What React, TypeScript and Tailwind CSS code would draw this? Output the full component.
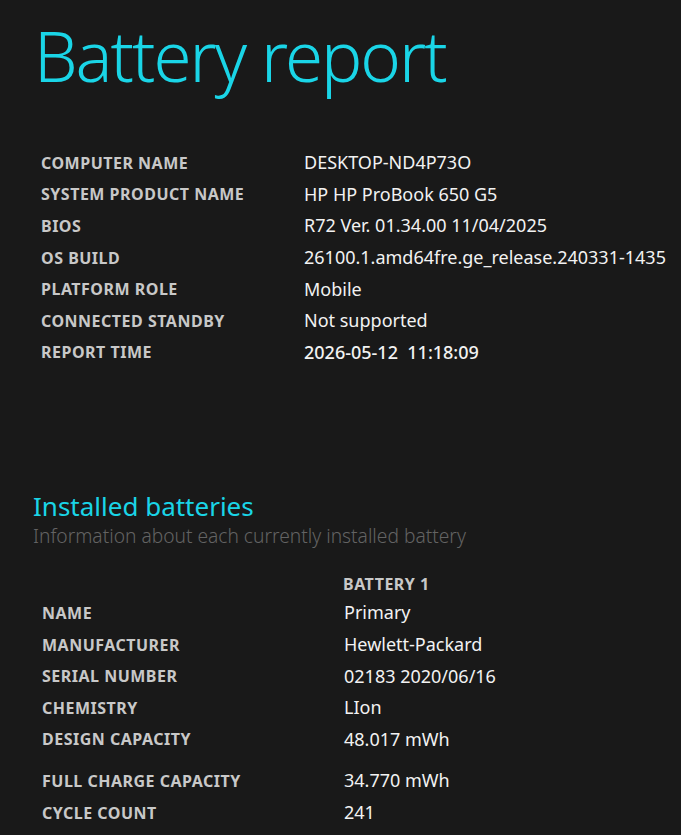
import React from "react";

const sys: [string, string][] = [
  ["COMPUTER NAME", "DESKTOP-ND4P73O"],
  ["SYSTEM PRODUCT NAME", "HP HP ProBook 650 G5"],
  ["BIOS", "R72 Ver. 01.34.00 11/04/2025"],
  ["OS BUILD", "26100.1.amd64fre.ge_release.240331-1435"],
  ["PLATFORM ROLE", "Mobile"],
  ["CONNECTED STANDBY", "Not supported"],
  ["REPORT TIME", "2026-05-12\u00a0\u00a011:18:09"],
];

const bat: [string, string][] = [
  ["NAME", "Primary"],
  ["MANUFACTURER", "Hewlett-Packard"],
  ["SERIAL NUMBER", "02183 2020/06/16"],
  ["CHEMISTRY", "LIon"],
  ["DESIGN CAPACITY", "48.017 mWh"],
];

const bat2: [string, string][] = [
  ["FULL CHARGE CAPACITY", "34.770 mWh"],
  ["CYCLE COUNT", "241"],
];

function Row({ k, v, w, pl, strong }: { k: string; v: string; w: string; pl: string; strong?: boolean }) {
  return (
    <div className="flex h-[31.6px] items-center">
      <div className={`${w} ${pl} text-[16px] font-bold tracking-[0.5px] text-[#c8c8c8]`}>{k}</div>
      <div className={`text-[18px] ${strong ? "font-medium" : ""} text-[#f2f2f2]`}>{v}</div>
    </div>
  );
}

export default function App() {
  return (
    <div
      className="min-h-[835px] w-[681px] overflow-hidden bg-[#191919] text-[#f2f2f2]"
      style={{ fontFamily: '"Noto Sans", "Open Sans", sans-serif' }}
    >
      <h1 className="pl-[34px] pt-[10px] text-[69px] leading-[90px] font-[350] text-[#1ad5e7] tracking-[-2px]">
        Battery report
      </h1>
      <div className="mt-[47px] flex flex-col">
        {sys.map(([k, v]) => (
          <Row key={k} k={k} v={v} w="w-[304px]" pl="pl-[41px]" strong={k === "REPORT TIME"} />
        ))}
      </div>
      <h2 className="mt-[123px] pl-[33px] text-[26px] leading-[30px] text-[#1ad5e7]">Installed batteries</h2>
      <p className="pl-[33px] text-[19.2px] leading-[30px] font-light text-[#636363]">
        Information about each currently installed battery
      </p>
      <div className="mt-[20px] flex h-[26px] items-center">
        <div className="w-[343px]" />
        <div className="text-[16px] font-bold tracking-[0.5px] text-[#c8c8c8]">BATTERY 1</div>
      </div>
      <div className="flex flex-col">
        {bat.map(([k, v]) => (
          <Row key={k} k={k} v={v} w="w-[344px]" pl="pl-[42px]" />
        ))}
      </div>
      <div className="mt-[10px] flex flex-col">
        {bat2.map(([k, v]) => (
          <Row key={k} k={k} v={v} w="w-[344px]" pl="pl-[42px]" />
        ))}
      </div>
    </div>
  );
}
